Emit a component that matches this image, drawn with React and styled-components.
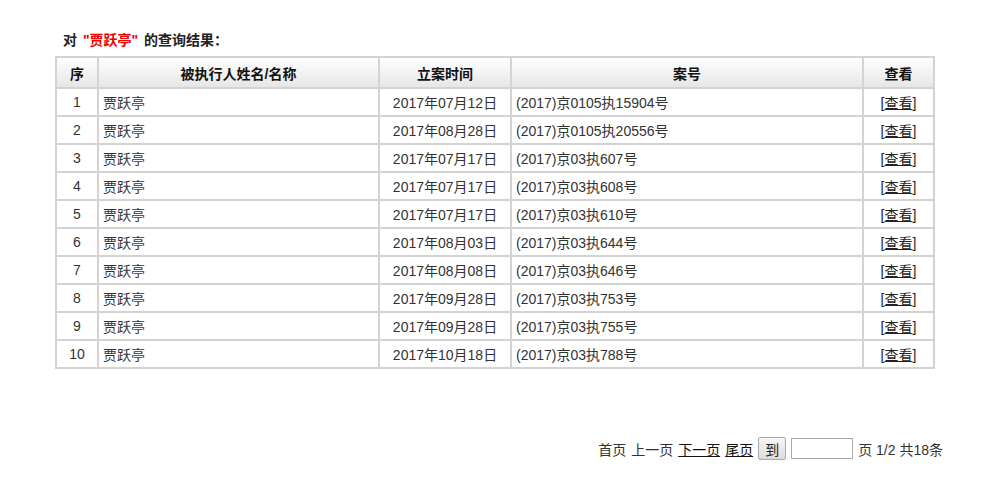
import React from 'react';
import styled, { createGlobalStyle } from 'styled-components';

const GlobalStyle = createGlobalStyle`
  body {
    margin: 0;
    background: #fff;
    font-family: "Liberation Sans", "Noto Sans CJK SC", sans-serif;
    font-size: 14px;
    color: #333;
  }
`;

const Page = styled.div`
  width: 983px;
  height: 483px;
  padding: 30px 0 0 55px;
  box-sizing: border-box;
`;

const Title = styled.div`
  font-weight: bold;
  color: #222;
  padding-left: 8px;
  height: 26px;
  line-height: 20px;
  word-spacing: 2px;
`;

const Name = styled.span`
  color: #e00;
`;

const Table = styled.table`
  width: 878px;
  border-collapse: collapse;
  table-layout: fixed;
  border: 2px solid #d3d3d3;
`;

const Th = styled.th`
  height: 29px;
  padding: 0;
  border: 2px solid #d3d3d3;
  background: linear-gradient(#ffffff, #e6e6e6);
  font-weight: bold;
  color: #111;
  text-align: center;
`;

const Td = styled.td`
  height: 26px;
  padding: 0 ${(p) => (p.$left ? '4px' : '0')};
  border: 2px solid #d3d3d3;
  text-align: ${(p) => (p.$left ? 'left' : 'center')};
  color: #333;
`;

const ViewLink = styled.a`
  color: #222;
  text-decoration: none;
  span {
    text-decoration: underline;
  }
`;

const Pager = styled.div`
  display: flex;
  justify-content: flex-end;
  align-items: center;
  gap: 5px;
  margin-top: 68px;
  padding-right: 40px;
  color: #333;
`;

const PagerLink = styled.a`
  color: #111;
  text-decoration: ${(p) => (p.$active ? 'underline' : 'none')};
`;

const GoButton = styled.button`
  height: 23px;
  width: 28px;
  padding: 0;
  font-family: inherit;
  font-size: 14px;
  color: #222;
  border: 1px solid #aaa;
  border-radius: 2px;
  background: linear-gradient(#f6f6f6, #dcdcdc);
`;

const PageInput = styled.input`
  width: 56px;
  height: 19px;
  border: 1px solid #aaa;
  padding: 0 2px;
`;

const rows = [
  ['2017年07月12日', '(2017)京0105执15904号'],
  ['2017年08月28日', '(2017)京0105执20556号'],
  ['2017年07月17日', '(2017)京03执607号'],
  ['2017年07月17日', '(2017)京03执608号'],
  ['2017年07月17日', '(2017)京03执610号'],
  ['2017年08月03日', '(2017)京03执644号'],
  ['2017年08月08日', '(2017)京03执646号'],
  ['2017年09月28日', '(2017)京03执753号'],
  ['2017年09月28日', '(2017)京03执755号'],
  ['2017年10月18日', '(2017)京03执788号'],
];

export default function App() {
  return (
    <Page>
      <GlobalStyle />
      <Title>
        对 <Name>"贾跃亭"</Name> 的查询结果：
      </Title>
      <Table>
        <colgroup>
          <col style={{ width: 42 }} />
          <col style={{ width: 281 }} />
          <col style={{ width: 132 }} />
          <col style={{ width: 352 }} />
          <col style={{ width: 71 }} />
        </colgroup>
        <thead>
          <tr>
            <Th>序</Th>
            <Th>被执行人姓名/名称</Th>
            <Th>立案时间</Th>
            <Th>案号</Th>
            <Th>查看</Th>
          </tr>
        </thead>
        <tbody>
          {rows.map(([date, no], i) => (
            <tr key={no}>
              <Td>{i + 1}</Td>
              <Td $left>贾跃亭</Td>
              <Td>{date}</Td>
              <Td $left>{no}</Td>
              <Td>
                <ViewLink href="#">[<span>查看</span>]</ViewLink>
              </Td>
            </tr>
          ))}
        </tbody>
      </Table>
      <Pager>
        <span>首页</span>
        <span>上一页</span>
        <PagerLink href="#" $active>下一页</PagerLink>
        <PagerLink href="#" $active>尾页</PagerLink>
        <GoButton>到</GoButton>
        <PageInput />
        <span>页 1/2 共18条</span>
      </Pager>
    </Page>
  );
}
